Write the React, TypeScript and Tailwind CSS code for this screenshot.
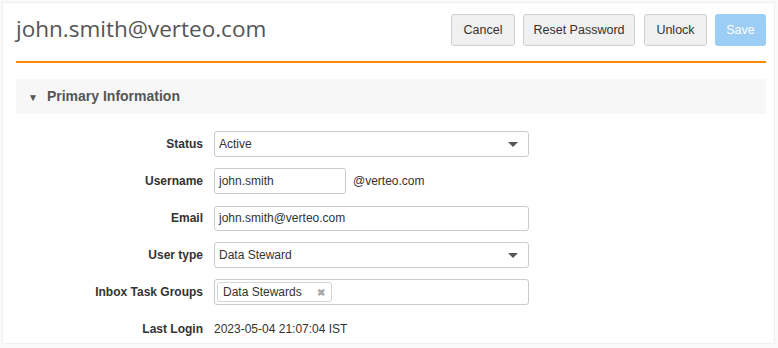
export default function App() {
  const rows = [
    { label: "Status", kind: "select", value: "Active" },
    { label: "Username", kind: "username", value: "john.smith" },
    { label: "Email", kind: "input", value: "john.smith@verteo.com" },
    { label: "User type", kind: "select", value: "Data Steward" },
    { label: "Inbox Task Groups", kind: "tags", value: "Data Stewards" },
    { label: "Last Login", kind: "text", value: "2023-05-04 21:07:04 IST" },
  ];

  return (
    <div className="w-[778px] h-[348px] bg-[#f9f9f9] pt-[2px] pl-[2px] pr-[3px] pb-[4px] font-['Liberation_Sans',Arial,sans-serif]">
      <div className="h-full bg-white border border-[#f0f0f0] pl-[13px] pr-[8px] pt-[11px]">
        <div className="flex items-center justify-between h-[32px]">
          <h1 className="font-['Open_Sans',sans-serif] text-[22.5px] text-[#555] leading-none -mt-[2px]">
            john.smith@verteo.com
          </h1>
          <div className="flex gap-[8px]">
            <button className="h-[32px] w-[64px] text-[12.5px] text-[#333] bg-[#f0f0f0] border border-[#d0d0d0] rounded-[3px]">Cancel</button>
            <button className="h-[32px] w-[112px] text-[12.5px] text-[#333] bg-[#f0f0f0] border border-[#d0d0d0] rounded-[3px]">Reset Password</button>
            <button className="ml-px h-[32px] w-[63px] text-[12.5px] text-[#333] bg-[#f0f0f0] border border-[#d0d0d0] rounded-[3px]">Unlock</button>
            <button className="h-[32px] w-[51px] text-[12.5px] text-white bg-[#9ccdf4] rounded-[3px]">Save</button>
          </div>
        </div>
        <div className="mt-[15px] h-[1.5px] bg-orange-400" />
        <div className="mt-[16px] h-[35px] bg-[#f7f7f7] flex items-center pl-[12px]">
          <span className="text-[10px] text-[#555] mr-[9px] mt-[2px]">▼</span>
          <span className="text-[14px] font-bold text-[#555]">Primary Information</span>
        </div>
        <div className="mt-[18px] flex flex-col gap-[12px]">
          {rows.map((r) => (
            <div key={r.label} className="flex items-center h-[25px]">
              <div className="w-[187px] text-right text-[12px] font-bold text-[#333]">{r.label}</div>
              <div className="ml-[11px] flex items-center">
                {r.kind === "select" && (
                  <div className="w-[315px] h-[26px] border border-[#ccc] rounded-[3px] bg-white flex items-center justify-between pl-[4px] pr-[10px] text-[12px] text-[#333]">
                    <span>{r.value}</span>
                    <svg width="10" height="5" viewBox="0 0 10 5">
                      <path d="M0 0 L10 0 L5 5 Z" fill="#555" />
                    </svg>
                  </div>
                )}
                {r.kind === "username" && (
                  <>
                    <div className="w-[132px] h-[26px] border border-[#ccc] rounded-[3px] flex items-center pl-[4px] text-[12px] text-[#333]">{r.value}</div>
                    <span className="ml-[7px] text-[12px] text-[#333]">@verteo.com</span>
                  </>
                )}
                {r.kind === "input" && (
                  <div className="w-[315px] h-[25px] border border-[#ccc] rounded-[3px] flex items-center pl-[4px] text-[12px] text-[#333]">{r.value}</div>
                )}
                {r.kind === "tags" && (
                  <div className="w-[315px] h-[26px] border border-[#ccc] rounded-[3px] flex items-center pl-[2px]">
                    <div className="h-[20px] w-[115px] border border-[#d5d5d5] rounded-[3px] bg-white flex items-center justify-between pl-[5px] pr-[6px] text-[12px] text-[#333]">
                      <span>{r.value}</span>
                      <span className="text-[10px] text-[#aaa] font-bold">✖</span>
                    </div>
                  </div>
                )}
                {r.kind === "text" && <span className="text-[12px] text-[#333]">{r.value}</span>}
              </div>
            </div>
          ))}
        </div>
      </div>
    </div>
  );
}
